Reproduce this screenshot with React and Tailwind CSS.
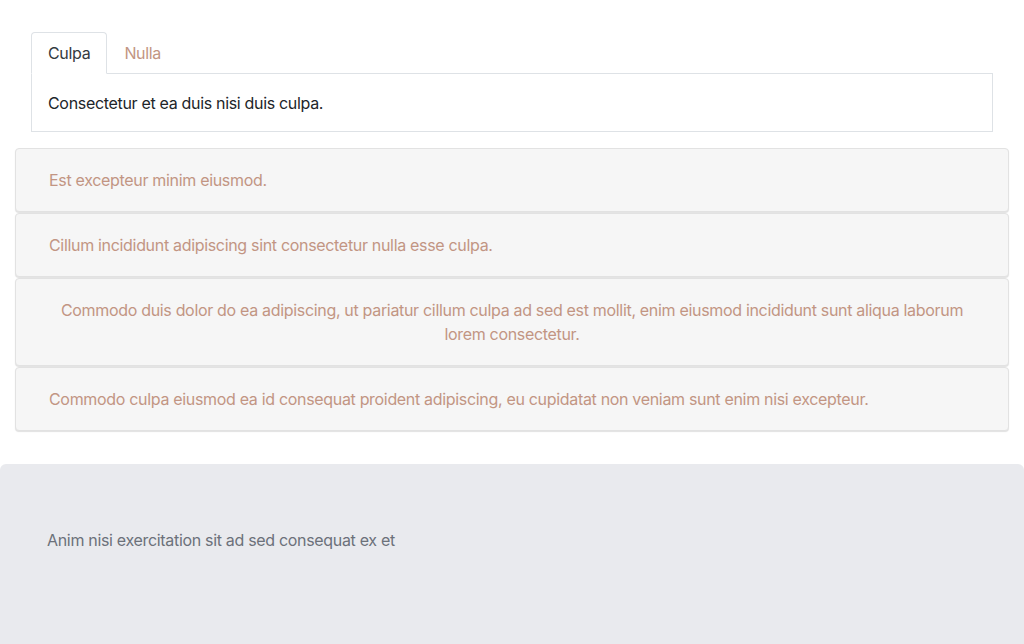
import { useState } from 'react';

const cards = [
  { text: 'Est excepteur minim eiusmod.', center: false },
  { text: 'Cillum incididunt adipiscing sint consectetur nulla esse culpa.', center: false },
  {
    text: 'Commodo duis dolor do ea adipiscing, ut pariatur cillum culpa ad sed est mollit, enim eiusmod incididunt sunt aliqua laborum lorem consectetur.',
    center: true,
  },
  {
    text: 'Commodo culpa eiusmod ea id consequat proident adipiscing, eu cupidatat non veniam sunt enim nisi excepteur.',
    center: false,
  },
];

export default function App() {
  const [tab, setTab] = useState('culpa');

  return (
    <div className="min-h-[644px] bg-white font-['Inter',sans-serif] text-base leading-6 tracking-[-0.02em]">
      {/* Pestañas */}
      <div className="px-[31px] pt-8">
        <div className="flex border-b border-[#dee2e6]">
          <button
            onClick={() => setTab('culpa')}
            className={
              tab === 'culpa'
                ? '-mb-px px-4 py-2 rounded-t border border-[#dee2e6] border-b-white bg-white text-[#343a40]'
                : '-mb-px px-4 py-2 border border-transparent text-[#c29583]'
            }
          >
            Culpa
          </button>
          <button
            onClick={() => setTab('nulla')}
            className={
              tab === 'nulla'
                ? '-mb-px px-4 py-2 rounded-t border border-[#dee2e6] border-b-white bg-white text-[#343a40]'
                : '-mb-px px-4 py-2 border border-transparent text-[#c29583]'
            }
          >
            Nulla
          </button>
        </div>
        <div className="border border-t-0 border-[#dee2e6] px-4 pt-[17px] pb-4 text-[#212529]">
          {tab === 'culpa' ? 'Consectetur et ea duis nisi duis culpa.' : 'Nulla.'}
        </div>
      </div>

      {/* Tarjetas */}
      <div className="mx-[15px] mt-4 flex flex-col gap-px">
        {cards.map((c) => (
          <div
            key={c.text}
            className={
              'rounded border border-[#e2e2e2] bg-[#f6f6f6] px-[33px] py-[19px] text-[#c29583] shadow-[0_1px_1px_rgba(0,0,0,0.12)] ' +
              (c.center ? 'text-center' : '')
            }
          >
            {c.text}
          </div>
        ))}
      </div>

      {/* Bloque inferior */}
      <div className="mt-[33px] rounded-t-md bg-[#e9eaee] px-[47px] pt-16 pb-24 text-[#6c717a]">
        Anim nisi exercitation sit ad sed consequat ex et
      </div>
    </div>
  );
}
